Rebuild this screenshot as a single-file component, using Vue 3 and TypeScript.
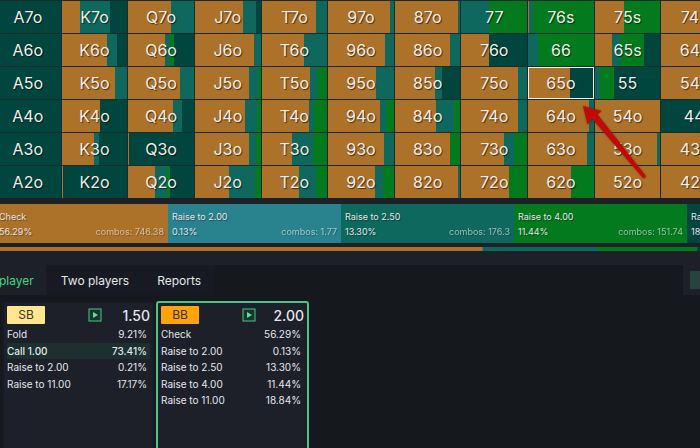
<script setup lang="ts">
import { ref } from 'vue'

type Move = 'C' | 'B' | 'T' | 'G' | 'D'
interface Part { move: Move; width: number }
interface Hand { name: string; parts: Part[] }

const CELL = 66

// Each hand lists its mix of moves; a part without a number takes the rest of the cell.
const source: string[][] = [
  ['A7o D', 'K7o C18 T31 D', 'Q7o C43 T', 'J7o C48 T13 D', 'T7o C55 T', '97o C62 T', '87o C64 T', '77 T28 G', '76s C1 T4 G', '75s C29 G', '74s C'],
  ['A6o D', 'K6o C46 T10 D', 'Q6o C37 T5 G4 D', 'J6o C59 T', 'T6o C43 T', '96o C57 T', '86o C55 T', '76o C28 D', '66 T10 G', '65s C17 T8 G25 D', '64s C'],
  ['A5o D', 'K5o C54 T', 'Q5o C52 T', 'J5o C54 T9 G', 'T5o C49 T7 G', '95o C48 T', '85o C40 T7 D', '75o C57 T', '65o C42 D', '55 T5 G14 D', '54s C'],
  ['A4o D', 'K4o C39 D', 'Q4o C45 T9 D', 'J4o C50 T12 G', 'T4o C48 T5 G', '94o C52 T6 G', '84o C41 T19 G', '74o C57 T', '64o C61 T', '54o C', '44 D'],
  ['A3o D', 'K3o C33 T5 D', 'Q3o C1 D', 'J3o C54 T7 G', 'T3o C31 T21 G', '93o C56 T', '83o C55 G', '73o C43 T10 G', '63o C59 T', '53o C63 T', '43s C'],
  ['A2o D', 'K2o C1 D', 'Q2o C27 T12 G3 D', 'J2o C34 T26 G', 'T2o C38 T17 G', '92o C47 T8 G', '82o C64 T', '72o C48 G', '62o C43 T1 G', '52o C', '42s C'],
]

function parseHand(text: string): Hand {
  const [name, ...rest] = text.split(' ')
  let left = CELL
  const parts = rest.map((p) => {
    const width = p.length > 1 ? Number(p.slice(1)) : left
    left -= width
    return { move: p[0] as Move, width: (width / CELL) * 100 }
  })
  return { name, parts }
}

const hands: Hand[] = source.flat().map(parseHand)
const selected = ref('65o')

const actions: { move: Move; label: string; share: number; combos: string }[] = [
  { move: 'C', label: 'Check', share: 56.29, combos: '746.38' },
  { move: 'B', label: 'Raise to 2.00', share: 0.13, combos: '1.77' },
  { move: 'T', label: 'Raise to 2.50', share: 13.3, combos: '176.3' },
  { move: 'G', label: 'Raise to 4.00', share: 11.44, combos: '151.74' },
  { move: 'D', label: 'Raise to 11.00', share: 18.84, combos: '249.81' },
]

const tabs = ['player', 'Two players', 'Reports']
const activeTab = ref('player')

const players = [
  {
    seat: 'SB', stack: '1.50', active: false,
    rows: [
      { label: 'Fold', value: '9.21%', chosen: false },
      { label: 'Call 1.00', value: '73.41%', chosen: true },
      { label: 'Raise to 2.00', value: '0.21%', chosen: false },
      { label: 'Raise to 11.00', value: '17.17%', chosen: false },
    ],
  },
  {
    seat: 'BB', stack: '2.00', active: true,
    rows: actions.map((a) => ({ label: a.label, value: a.share.toFixed(2) + '%', chosen: false })),
  },
]
</script>

<template>
  <main class="page">
    <section class="matrix">
      <button
        v-for="hand in hands"
        :key="hand.name"
        type="button"
        class="hand"
        :class="{ selected: hand.name === selected }"
        :aria-pressed="hand.name === selected"
        @click="selected = hand.name"
      >
        <span class="mix">
          <span v-for="(part, i) in hand.parts" :key="i" :class="'move-' + part.move" :style="{ width: part.width + '%' }"></span>
        </span>
        <span class="name">{{ hand.name }}</span>
      </button>
      <svg class="arrow" viewBox="0 0 64 74" aria-hidden="true">
        <path d="M1 1 L19.500 6 L15.500 9.500 L63.500 70.500 Q64 73.500 61 73 L10.500 14 L5.500 19.500 Z" />
      </svg>
    </section>

    <section class="legend">
      <div v-for="a in actions" :key="a.label" class="action" :class="'move-' + a.move">
        <span>{{ a.label }}</span>
        <span class="figures">
          <span>{{ a.share.toFixed(2) }}%</span>
          <span class="combos">combos: {{ a.combos }}</span>
        </span>
      </div>
    </section>
    <div class="totals">
      <span v-for="a in actions" :key="a.label" :class="'move-' + a.move" :style="{ width: a.share + '%' }"></span>
    </div>

    <nav class="tabs">
      <button
        v-for="tab in tabs"
        :key="tab"
        type="button"
        class="tab"
        :class="{ current: tab === activeTab }"
        @click="activeTab = tab"
      >{{ tab }}</button>
      <div class="tools"><span class="tool"></span></div>
    </nav>

    <section class="players">
      <article v-for="p in players" :key="p.seat" class="player" :class="{ active: p.active }">
        <header class="head">
          <span class="seat" :class="p.seat.toLowerCase()">{{ p.seat }}</span>
          <button type="button" class="play" :aria-label="'Play ' + p.seat">
            <svg viewBox="0 0 14 14">
              <rect x="1" y="1" width="12" height="12" />
              <path d="M5 4 L10 7 L5 10 Z" />
            </svg>
          </button>
          <span class="stack">{{ p.stack }}</span>
        </header>
        <table class="moves">
          <tbody>
            <tr v-for="row in p.rows" :key="row.label" :class="{ chosen: row.chosen }">
              <th scope="row">{{ row.label }}</th>
              <td>{{ row.value }}</td>
            </tr>
          </tbody>
        </table>
      </article>
    </section>
  </main>
</template>

<style>
body {
  background: #15181d;
}
</style>

<style scoped>
.page {
  display: flex;
  flex-direction: column;
  height: 100vh;
  overflow: hidden;
  background: #1d2027;
  color: #e4e6e9;
  font-family: Inter, "Liberation Sans", sans-serif;
}

button {
  margin: 0;
  padding: 0;
  border: 0;
  background: none;
  color: inherit;
  font: inherit;
  cursor: pointer;
}

.move-C { background: #ad7229; }
.move-B { background: #28838f; }
.move-T { background: #0e685e; }
.move-G { background: #027a1d; }
.move-D { background: #00463f; }

.matrix {
  position: relative;
  display: grid;
  grid-template-columns: repeat(11, 1fr);
  grid-auto-rows: 33px;
  flex: none;
  margin: 0 -27px 0 -6px;
  padding-bottom: 6px;
}

.hand {
  display: grid;
  min-width: 0;
  border-top: 1px solid #1c2a29;
  border-left: 1px solid #1c2a29;
}

.mix,
.name {
  grid-area: 1 / 1;
}

.mix {
  display: flex;
  align-self: stretch;
}

.hand.selected .mix {
  outline: 1px solid #f0eee9;
  outline-offset: -1px;
}

.name {
  align-self: center;
  color: #f1ede8;
  font-size: 16px;
  line-height: 20px;
  text-align: center;
  text-shadow: 1px 1px 1px rgba(0, 0, 0, 0.6);
}

.arrow {
  position: absolute;
  top: 105px;
  left: 588px;
  width: 64px;
  height: 74px;
  fill: #c00a05;
  filter: drop-shadow(0 0 1px rgba(70, 10, 0, 0.5));
  pointer-events: none;
}

.legend {
  display: grid;
  grid-template-columns: repeat(5, 1fr);
  flex: none;
  margin: 0 -160px 0 -5px;
}

.action {
  display: flex;
  flex-direction: column;
  padding: 5px 4px 4px;
  font-size: 9px;
  line-height: 15px;
  text-shadow: 1px 1px 1px rgba(0, 0, 0, 0.4);
}

.figures {
  display: flex;
  justify-content: space-between;
}

.combos {
  opacity: 0.65;
}

.totals {
  display: flex;
  flex: none;
  height: 4px;
  margin: 4px -160px 14px -5px;
}

.tabs {
  display: flex;
  flex: none;
  height: 30px;
  background: #15181d;
}

.tab {
  padding: 0 13px 0 15px;
  background: #171a22;
  font-size: 12px;
}

.tab.current {
  padding: 0 12px 0 0;
  margin-left: -1px;
  background: #1d2027;
  color: #45d483;
}

.tools {
  display: flex;
  align-items: center;
  margin-left: auto;
  padding-left: 7px;
  background: #1d2027;
}

.tool {
  width: 10px;
  height: 18px;
  background: #25443d;
}

.players {
  display: flex;
  flex: 1;
  gap: 1px;
  padding: 6px 2px 0;
  background: #15181d;
}

.player {
  box-sizing: border-box;
  width: 153px;
  margin-bottom: -8px;
  padding: 3px 3px 0;
  border: 2px solid #171a20;
  border-radius: 3px;
  background: #1d2029;
}

.player.active {
  border-color: #4cc584;
}

.head {
  display: flex;
  align-items: center;
  height: 18px;
  margin-bottom: 2px;
}

.seat {
  width: 38px;
  border-radius: 1px;
  color: #3c3519;
  font-size: 12px;
  line-height: 18px;
  text-align: center;
}

.seat.sb { background: #ffe68f; }
.seat.bb { background: #ffa405; }

.play {
  display: flex;
  width: 14px;
  height: 14px;
  margin-left: auto;
}

.play svg {
  width: 14px;
  height: 14px;
}

.play rect {
  fill: #18352f;
  stroke: #4cc584;
}

.play path {
  fill: #5fe09a;
}

.stack {
  width: 48px;
  font-size: 14px;
  font-weight: 500;
  text-align: right;
}

.moves {
  width: 100%;
  border-collapse: collapse;
  font-size: 10px;
  line-height: 1.65;
}

.moves th,
.moves td {
  padding: 0;
  font-weight: 400;
  text-align: left;
}

.moves td {
  padding-right: 3px;
  text-align: right;
}

.moves .chosen {
  background: #1b302f;
}

.moves .chosen th,
.moves .chosen td {
  font-weight: 500;
}
</style>
